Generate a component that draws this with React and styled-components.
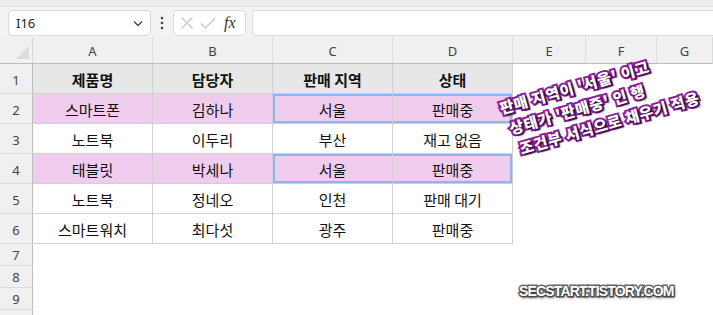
import React from 'react';
import styled, { createGlobalStyle } from 'styled-components';

const GlobalStyle = createGlobalStyle`
  html, body { margin:0; padding:0; background:#fff; }
  body { width:713px; height:315px; overflow:hidden; font-family:"Noto Sans CJK KR","Noto Sans",sans-serif; }
`;

const Page = styled.div`
  position:relative;
  width:713px;
  height:315px;
  overflow:hidden;
  background:#fff;
`;

const TopStrip = styled.div`
  height:6px;
  background:#ececec;
  border-bottom:1px solid #e0e0e0;
`;

const FormulaBar = styled.div`
  display:flex;
  align-items:center;
  height:29px;
  padding:1px 0 0 8px;
  background:#f3f3f3;
`;

const NameBox = styled.div`
  box-sizing:border-box;
  width:143px;
  height:26px;
  display:flex;
  align-items:center;
  justify-content:space-between;
  padding:0 6px 0 7px;
  background:#fff;
  border:1px solid #d9d9d9;
  border-radius:4px;
  font-family:"Noto Sans","Liberation Sans",sans-serif;
  font-size:13px;
  color:#222;
`;

const Dots = styled.div`
  width:22px;
  display:flex;
  justify-content:center;
`;

const FxBox = styled.div`
  box-sizing:border-box;
  width:73px;
  height:26px;
  display:flex;
  align-items:center;
  gap:6px;
  padding:0 4px 0 6px;
  background:#fff;
  border:1px solid #d9d9d9;
  border-radius:4px;
`;

const FxText = styled.span`
  font-family:"Liberation Serif",serif;
  font-style:italic;
  font-size:16px;
  color:#333;
  margin-left:2px;
`;

const FormulaInput = styled.div`
  box-sizing:border-box;
  flex:1;
  height:26px;
  margin-left:6px;
  background:#fff;
  border:1px solid #d9d9d9;
  border-right:none;
  border-radius:4px 0 0 4px;
`;

const Sheet = styled.div`
  display:grid;
  grid-template-columns:33px 120px 120px 120px 120px 73px 71px 56px;
  grid-template-rows:27px repeat(6, 30px) repeat(4, 22px);
  background:#fff;
`;

const Corner = styled.div`
  position:relative;
  background:#f0f0f0;
  border-bottom:1px solid #bdbdbd;
  border-right:1px solid #d6d6d6;
  box-sizing:border-box;
  &::after {
    content:"";
    position:absolute;
    right:3px;
    bottom:4px;
    border-style:solid;
    border-width:0 0 13px 13px;
    border-color:transparent transparent #dcdcdc transparent;
  }
`;

const ColHead = styled.div`
  box-sizing:border-box;
  display:flex;
  align-items:center;
  justify-content:center;
  background:#f0f0f0;
  border-bottom:1px solid #bdbdbd;
  border-right:1px solid #dcdcdc;
  font-family:"Noto Sans","Liberation Sans",sans-serif;
  font-size:13px;
  color:#444;
  padding-top:2px;
`;

const RowHead = styled.div`
  box-sizing:border-box;
  display:flex;
  align-items:flex-end;
  justify-content:center;
  padding-bottom:${p => (p.$short ? '1px' : '4px')};
  background:#f0f0f0;
  border-right:1px solid #bdbdbd;
  border-bottom:1px solid #dcdcdc;
  font-family:"Noto Sans","Liberation Sans",sans-serif;
  font-size:13px;
  line-height:18px;
  color:#444;
`;

const Cell = styled.div`
  box-sizing:border-box;
  display:flex;
  align-items:center;
  justify-content:center;
  font-size:15px;
  color:#111;
  font-weight:${p => (p.$bold ? 700 : 400)};
  background:${p => p.$bg || '#fff'};
  border-right:1px solid ${p => (p.$grid ? '#d0d0d0' : 'transparent')};
  border-bottom:1px solid ${p => (p.$grid ? '#d0d0d0' : 'transparent')};
  padding-top:1px;
  box-shadow:${p => p.$sel || 'none'};
`;

const Note = styled.div`
  position:absolute;
  left:497px;
  top:98px;
  transform:rotate(-16deg);
  transform-origin:left top;
  display:flex;
  flex-direction:column;
`;

const NoteLine = styled.div`
  white-space:nowrap;
  font-family:"Noto Sans CJK KR",sans-serif;
  font-weight:900;
  font-size:15px;
  line-height:22px;
  letter-spacing:0.7px;
  color:#fff;
  padding-left:${p => p.$indent || 0}px;
  -webkit-text-stroke:4px #8a1f9e;
  paint-order:stroke fill;
  text-shadow:2px 2px 2px rgba(0,0,0,0.7);
`;

const Watermark = styled.div`
  position:absolute;
  left:519px;
  top:283px;
  font-family:"Liberation Sans",sans-serif;
  font-weight:700;
  font-size:14px;
  letter-spacing:-0.85px;
  color:#fff;
  -webkit-text-stroke:3px #6a6a6a;
  paint-order:stroke fill;
  text-shadow:1px 2px 3px rgba(0,0,0,0.6);
`;

const PINK = '#f0cdee';
const HEAD = '#e7e7e7';
const SEL = '#8db6ee';
const selLeft = `inset 2px 2px 0 ${SEL}, inset 0 -2px 0 ${SEL}`;
const selRight = `inset -2px 2px 0 ${SEL}, inset 0 -2px 0 ${SEL}`;

const cols = ['A', 'B', 'C', 'D', 'E', 'F', 'G'];
const rows = [
  { cells: ['제품명', '담당자', '판매 지역', '상태'], bg: HEAD, bold: true },
  { cells: ['스마트폰', '김하나', '서울', '판매중'], bg: PINK, sel: true },
  { cells: ['노트북', '이두리', '부산', '재고 없음'] },
  { cells: ['태블릿', '박세나', '서울', '판매중'], bg: PINK, sel: true },
  { cells: ['노트북', '정네오', '인천', '판매 대기'] },
  { cells: ['스마트워치', '최다섯', '광주', '판매중'] },
];

function Chevron() {
  return (
    <svg width="12" height="12" viewBox="0 0 12 12">
      <path d="M2 4.5 L6 8.5 L10 4.5" fill="none" stroke="#444" strokeWidth="1.3" />
    </svg>
  );
}

function VDots() {
  return (
    <svg width="4" height="14" viewBox="0 0 4 14">
      <circle cx="2" cy="2" r="1.3" fill="#444" />
      <circle cx="2" cy="7" r="1.3" fill="#444" />
      <circle cx="2" cy="12" r="1.3" fill="#444" />
    </svg>
  );
}

function Cross() {
  return (
    <svg width="14" height="14" viewBox="0 0 14 14">
      <path d="M1.5 1.5 L12.5 12.5 M12.5 1.5 L1.5 12.5" stroke="#c4c4c4" strokeWidth="1.2" fill="none" />
    </svg>
  );
}

function Check() {
  return (
    <svg width="16" height="14" viewBox="0 0 16 14">
      <path d="M1 7.5 L5.5 12 L15 2" stroke="#c4c4c4" strokeWidth="1.2" fill="none" />
    </svg>
  );
}

export default function App() {
  return (
    <Page>
      <GlobalStyle />
      <TopStrip />
      <FormulaBar>
        <NameBox>
          <span>I16</span>
          <Chevron />
        </NameBox>
        <Dots><VDots /></Dots>
        <FxBox>
          <Cross />
          <Check />
          <FxText>fx</FxText>
        </FxBox>
        <FormulaInput />
      </FormulaBar>
      <Sheet>
        <Corner />
        {cols.map(c => <ColHead key={c}>{c}</ColHead>)}
        {rows.map((r, i) => (
          <React.Fragment key={i}>
            <RowHead>{i + 1}</RowHead>
            {r.cells.map((t, j) => (
              <Cell
                key={j}
                $grid
                $bg={r.bg}
                $bold={r.bold}
                $sel={r.sel && j === 2 ? selLeft : r.sel && j === 3 ? selRight : undefined}
              >
                {t}
              </Cell>
            ))}
            <Cell /><Cell /><Cell />
          </React.Fragment>
        ))}
        {[7, 8, 9, null].map((n, k) => (
          <React.Fragment key={k}>
            <RowHead $short>{n}</RowHead>
            <Cell /><Cell /><Cell /><Cell /><Cell /><Cell /><Cell />
          </React.Fragment>
        ))}
      </Sheet>
      <Note>
        <NoteLine>판매 지역이 '서울' 이고</NoteLine>
        <NoteLine $indent={4}>상태가 '판매중' 인 행</NoteLine>
        <NoteLine $indent={8}>조건부 서식으로 채우기 적용</NoteLine>
      </Note>
      <Watermark>SECSTART.TISTORY.COM</Watermark>
    </Page>
  );
}
